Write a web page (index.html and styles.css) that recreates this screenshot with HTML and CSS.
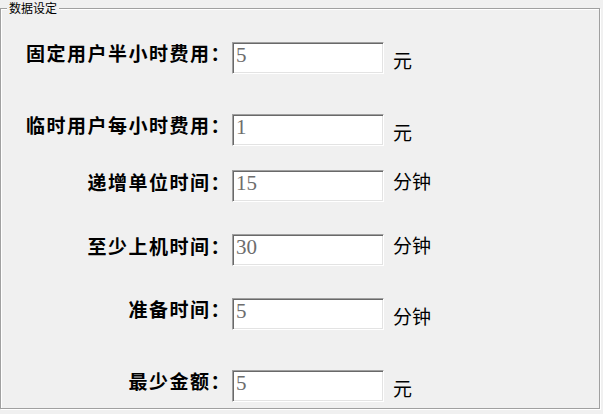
FILE: index.html
```html
<!DOCTYPE html>
<html lang="zh-CN">
<head>
    <meta charset="UTF-8">
    <meta name="viewport" content="width=device-width, initial-scale=1.0">
    <title>数据设定</title>
    <link rel="stylesheet" href="styles.css">
</head>
<body>
    <div class="group">
        <span class="group-title">数据设定</span>

        <div class="row">
            <label class="label" for="gudingFee">固定用户半小时费用：</label>
            <input class="field" type="text" id="gudingFee" value="5">
            <span class="unit">元</span>
        </div>

        <div class="row gap-lg">
            <label class="label" for="linshiFee">临时用户每小时费用：</label>
            <input class="field" type="text" id="linshiFee" value="1">
            <span class="unit">元</span>
        </div>

        <div class="row gap-sm">
            <label class="label label-low" for="dizeng">递增单位时间：</label>
            <input class="field" type="text" id="dizeng" value="15">
            <span class="unit unit-mid">分钟</span>
        </div>

        <div class="row gap-md">
            <label class="label label-low" for="zhishao">至少上机时间：</label>
            <input class="field" type="text" id="zhishao" value="30">
            <span class="unit unit-mid">分钟</span>
        </div>

        <div class="row gap-md">
            <label class="label" for="zhunbei">准备时间：</label>
            <input class="field" type="text" id="zhunbei" value="5">
            <span class="unit">分钟</span>
        </div>

        <div class="row gap-lg">
            <label class="label" for="zuishao">最少金额：</label>
            <input class="field" type="text" id="zuishao" value="5">
            <span class="unit">元</span>
        </div>
    </div>
</body>
</html>
```

FILE: styles.css
```css
body {
    margin: 0;
    padding: 0;
    background-color: #f0f0f0;
    font-family: "Noto Sans CJK SC", "Noto Sans", sans-serif;
    color: #000;
    width: 603px;
    height: 414px;
    overflow: hidden;
}
.group {
    position: relative;
    box-sizing: border-box;
    margin-top: 8px;
    width: 600px;
    height: 401px;
    padding-top: 33px;
    border: 1px solid #a0a0a0;
    box-shadow: inset 1px 1px 0 #fff, 1px 1px 0 #fff;
}
.group-title {
    position: absolute;
    top: -9px;
    left: 6px;
    padding: 0 2px;
    background-color: #f0f0f0;
    font-size: 12px;
    line-height: 16px;
}
.row {
    display: flex;
    align-items: flex-start;
    height: 32px;
}
.gap-sm {
    margin-top: 24px;
}
.gap-md {
    margin-top: 32px;
}
.gap-lg {
    margin-top: 40px;
}
.label {
    box-sizing: border-box;
    width: 231px;
    padding-right: 1px;
    text-align: right;
    font-size: 19px;
    font-weight: bold;
    letter-spacing: 1.5px;
    line-height: 22px;
    margin-top: 0;
}
.label-low {
    margin-top: 1px;
}
.field {
    box-sizing: border-box;
    width: 152px;
    height: 32px;
    margin: 0;
    padding: 0 3px 6px 3px;
    border: 1px solid;
    border-color: #a0a0a0 #fff #fff #a0a0a0;
    box-shadow: inset 1px 1px 0 #696969, inset -1px -1px 0 #e3e3e3;
    background-color: #fff;
    font-family: "Liberation Serif", serif;
    font-size: 21px;
    color: #6d6d6d;
    outline: none;
}
.unit {
    padding-left: 9px;
    font-size: 19px;
    line-height: 22px;
    margin-top: 7px;
}
.unit-mid {
    margin-top: 0;
}
```
